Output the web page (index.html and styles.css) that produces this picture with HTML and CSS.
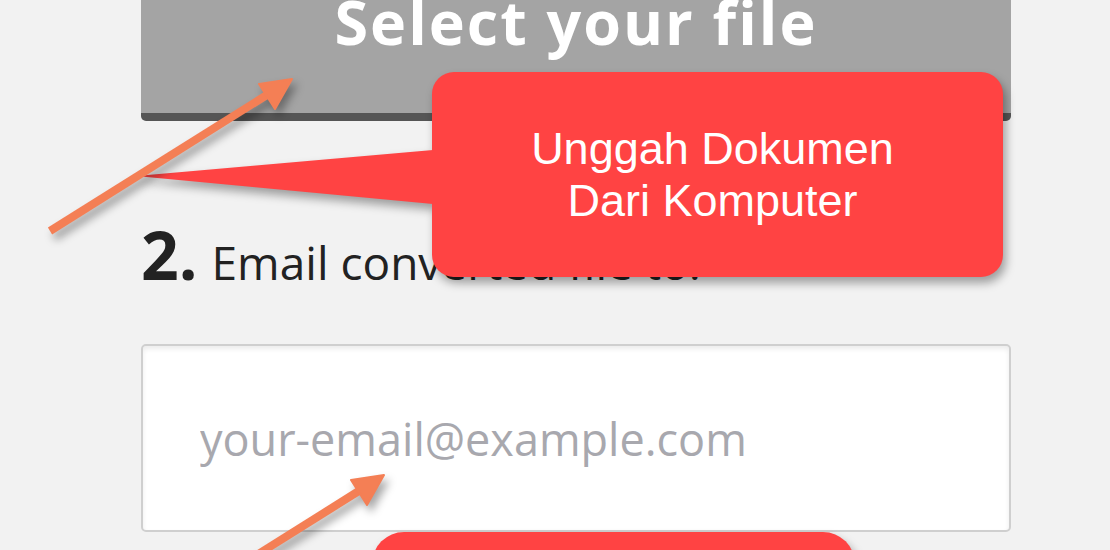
FILE: index.html
```html
<!DOCTYPE html>
<html>
<head>
<meta charset="utf-8">
<link rel="stylesheet" href="styles.css">
</head>
<body>
<div class="page">
  <main class="form">
    <button class="select-btn" type="button">Select your file</button>
    <h2 class="step"><span class="step-num">2.</span><span class="step-label">Email converted file to:</span></h2>
    <input class="email" type="text" placeholder="your-email@example.com">
  </main>

  <div class="callout callout-upload">
    <svg class="callout-tail" width="300" height="60" viewBox="0 0 300 60"><polygon points="300,2 3,28 300,56" fill="#ff4343"/></svg>
    <p class="callout-text">Unggah Dokumen<br>Dari Komputer</p>
  </div>
  <div class="callout callout-email"></div>

  <svg class="arrows" width="1110" height="550" viewBox="0 0 1110 550">
    <g class="arrow" fill="#f47f55" stroke="#f47f55">
      <line x1="50" y1="231" x2="270" y2="93" stroke-width="8" stroke-linecap="butt"/>
      <polygon points="292,79 259,84 275,109" stroke-width="2" stroke-linejoin="round"/>
    </g>
    <g class="arrow" fill="#f47f55" stroke="#f47f55">
      <line x1="142" y1="627" x2="362" y2="489" stroke-width="8"/>
      <polygon points="384,475 351,480 367,505" stroke-width="2" stroke-linejoin="round"/>
    </g>
  </svg>
</div>
</body>
</html>
```
FILE: styles.css
```css
html, body {
  margin: 0;
  padding: 0;
}
body {
  background: #f2f2f2;
  width: 1110px;
  height: 550px;
  overflow: hidden;
}
.page {
  position: relative;
  width: 1110px;
  height: 550px;
  overflow: hidden;
}
.form {
  display: flex;
  flex-direction: column;
  padding-left: 141px;
  width: 870px;
}
.select-btn {
  margin: -8px 0 0 0;
  padding: 0;
  width: 870px;
  height: 129px;
  background: #a4a4a4;
  border: none;
  border-bottom: 8px solid #555555;
  border-radius: 0 0 5px 5px;
  color: #ffffff;
  font-family: "Open Sans", sans-serif;
  font-weight: 700;
  font-size: 61px;
  letter-spacing: 2px;
  line-height: 60px;
  text-align: center;
  display: flex;
  justify-content: center;
  align-items: flex-start;
}
.step {
  display: flex;
  align-items: baseline;
  gap: 14px;
  margin: 133px 0 0 0;
  height: 0;
  line-height: 0;
  color: #222222;
  font-family: "Open Sans", sans-serif;
}
.step-num {
  font-size: 66px;
  font-weight: 700;
}
.step-label {
  font-size: 46px;
  font-weight: 400;
}
.email {
  box-sizing: border-box;
  margin: 90px 0 0 0;
  width: 870px;
  height: 188px;
  padding: 0 0 0 57px;
  background: #ffffff;
  border: 2px solid #cfcfcf;
  border-radius: 5px;
  box-shadow: inset 0 3px 5px rgba(0,0,0,0.08);
  font-family: "Open Sans", sans-serif;
  font-size: 45px;
  color: #333;
  outline: none;
}
.email::placeholder {
  color: #a8a8ae;
}
.callout {
  position: absolute;
  background: #ff4343;
  filter: drop-shadow(3px 6px 5px rgba(0,0,0,0.35));
}
.callout-upload {
  left: 432px;
  top: 72px;
  width: 571px;
  height: 205px;
  border-radius: 22px;
  display: flex;
  align-items: center;
  justify-content: center;
}
.callout-tail {
  position: absolute;
  left: -299px;
  top: 76px;
}
.callout-text {
  margin: 0 10px 0 0;
  color: #ffffff;
  font-family: "Liberation Sans", Arial, sans-serif;
  font-size: 45px;
  line-height: 52px;
  text-align: center;
}
.callout-email {
  left: 372px;
  top: 532px;
  width: 483px;
  height: 80px;
  border-radius: 32px;
}
.arrows {
  position: absolute;
  left: 0;
  top: 0;
  pointer-events: none;
}
.arrow {
  filter: drop-shadow(4px 6px 4px rgba(0,0,0,0.35));
}
```
